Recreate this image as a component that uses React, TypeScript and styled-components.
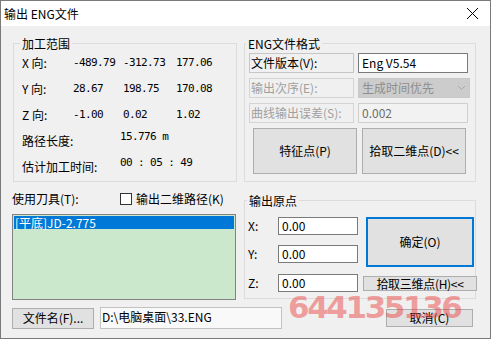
import React from 'react';
import styled, { createGlobalStyle } from 'styled-components';

const GlobalStyle = createGlobalStyle`
  html, body {
    margin: 0;
    padding: 0;
    background: #ffffff;
  }
  body {
    font-family: "Noto Sans CJK SC", "Noto Sans", sans-serif;
    font-size: 12px;
    line-height: 14px;
    color: #000;
  }
  * {
    box-sizing: border-box;
  }
`;

const Window = styled.div`
  position: relative;
  width: 491px;
  height: 339px;
  border: 1px solid #7a7a7a;
  background: #f0f0f0;
  display: flex;
  flex-direction: column;
  overflow: hidden;
`;

const TitleBar = styled.div`
  height: 25px;
  background: #ffffff;
  display: flex;
  align-items: center;
  justify-content: space-between;
  padding: 0 11px 0 3px;
`;

const CloseIcon = styled.svg`
  width: 13px;
  height: 13px;
`;

const Body = styled.div`
  flex: 1;
  padding: 11px 14px 0 11px;
  display: flex;
  flex-direction: column;
`;

const Row = styled.div<{ $gap: number; $top?: number }>`
  display: flex;
  gap: ${p => p.$gap}px;
  margin-top: ${p => p.$top ?? 0}px;
`;

const Group = styled.fieldset<{ $w: number; $h: number; $pl: number; $pt: number; $ml?: number; $mt?: number }>`
  margin: ${p => p.$mt ?? 0}px 0 0 ${p => p.$ml ?? 0}px;
  width: ${p => p.$w}px;
  height: ${p => p.$h}px;
  min-width: 0;
  border: 1px solid #dcdcdc;
  padding: ${p => p.$pt}px 2px 0 ${p => p.$pl}px;
`;

const Legend = styled.legend<{ $ml: number }>`
  padding: 0 2px;
  margin-left: ${p => p.$ml}px;
  line-height: 13px;
`;

const RangeGrid = styled.div`
  display: grid;
  grid-template-columns: 51px 50px 53px 1fr;
  grid-auto-rows: 26px;
  align-items: center;
`;

const Mono = styled.span`
  font-family: "DejaVu Sans Mono", "Liberation Mono", monospace;
  font-size: 11px;
  letter-spacing: -0.6px;
  white-space: pre;
`;

const StatRow = styled.div`
  display: flex;
  align-items: center;
  height: 26px;
`;

const StatLabel = styled.span`
  width: 98px;
`;

const StatValue = styled(Mono)`
  margin-bottom: 8px;
`;

const FormCol = styled.div`
  display: flex;
  flex-direction: column;
  gap: 5px;
`;

const FieldRow = styled.div`
  display: flex;
  gap: 4px;
`;

const LabelBox = styled.div<{ $disabled?: boolean }>`
  width: 105px;
  height: 20px;
  border: 1px solid ${p => (p.$disabled ? '#d4d4d4' : '#c6c6c6')};
  color: ${p => (p.$disabled ? '#a0a0a0' : '#000')};
  padding-left: 1px;
  display: flex;
  align-items: center;
`;

const TextBox = styled.div<{ $w: number; $h: number; $disabled?: boolean }>`
  width: ${p => p.$w}px;
  height: ${p => p.$h}px;
  border: 1px solid ${p => (p.$disabled ? '#cfcfcf' : '#7a7a7a')};
  background: ${p => (p.$disabled ? '#f2f2f2' : '#ffffff')};
  color: ${p => (p.$disabled ? '#6d6d6d' : '#000')};
  padding: 0 3px;
  display: flex;
  align-items: center;
`;

const SelectBox = styled.div`
  width: 112px;
  height: 20px;
  background: #cccccc;
  border: 1px solid #c8c8c8;
  color: #8e8e8e;
  padding: 0 3px;
  display: flex;
  align-items: center;
  justify-content: space-between;
`;

const Button = styled.div<{ $w: number; $h: number; $default?: boolean }>`
  width: ${p => p.$w}px;
  height: ${p => p.$h}px;
  background: #e1e1e1;
  border: ${p => (p.$default ? '2px solid #0078d7' : '1px solid #adadad')};
  display: flex;
  align-items: center;
  justify-content: center;
  flex-shrink: 0;
  white-space: nowrap;
`;

const ButtonRow = styled.div`
  display: flex;
  gap: 5px;
  padding-left: 4px;
`;

const LeftCol = styled.div`
  width: 225px;
  display: flex;
  flex-direction: column;
`;

const ToolHeader = styled.div`
  height: 18px;
  display: flex;
  align-items: center;
`;

const ToolLabel = styled.span`
  width: 108px;
`;

const Check = styled.span`
  width: 12px;
  height: 12px;
  border: 1px solid #333;
  background: #fff;
  margin-right: 4px;
`;

const ToolList = styled.div`
  margin-top: 6px;
  width: 224px;
  height: 86px;
  border: 1px solid #828282;
  background: #cce8cc;
  padding: 1px;
`;

const ToolItem = styled.div<{ $selected?: boolean }>`
  height: 13px;
  line-height: 13px;
  padding-left: 1px;
  background: ${p => (p.$selected ? '#0078d7' : 'transparent')};
  color: ${p => (p.$selected ? '#fff' : '#000')};
`;

const OriginGrid = styled.div`
  display: grid;
  grid-template-columns: 25px 80px 114px;
  grid-template-rows: 28px 22px 25px;
  column-gap: 5px;
`;

const AxisLabel = styled.span<{ $align: string }>`
  align-self: ${p => p.$align};
  line-height: 18px;
`;

const AxisInput = styled(TextBox)<{ $align: string }>`
  align-self: ${p => p.$align};
`;

const OkButton = styled(Button)`
  grid-column: 3;
  grid-row: 1 / 3;
  margin: 0 3px;
  width: auto;
`;

const PickButton = styled(Button)`
  grid-column: 3;
  grid-row: 3;
  align-self: end;
  margin-bottom: 1px;
  letter-spacing: -0.3px;
`;

const BottomRow = styled.div`
  margin-top: 7px;
  height: 22px;
  display: flex;
  align-items: center;
`;

const PathBox = styled.div`
  margin-left: 6px;
  width: 182px;
  height: 22px;
  border: 1px solid #c2c2c2;
  background: #f9f9f9;
  padding: 2px 1px 0;
  align-self: flex-start;
`;

const CancelButton = styled(Button)`
  margin-left: auto;
  margin-right: 3px;
`;

const Watermark = styled.div`
  position: absolute;
  left: 287px;
  top: 291px;
  font-family: "DejaVu Sans", sans-serif;
  font-weight: bold;
  font-size: 31px;
  line-height: 31px;
  letter-spacing: -2.4px;
  color: rgba(236, 64, 64, 0.48);
  pointer-events: none;
`;

const ranges = [
  ['X 向:', '-489.79', '-312.73', '177.06'],
  ['Y 向:', '28.67', '198.75', '170.08'],
  ['Z 向:', '-1.00', '0.02', '1.02'],
];

export default function App() {
  return (
    <>
      <GlobalStyle />
      <Window>
        <TitleBar>
          <span>输出 ENG文件</span>
          <CloseIcon viewBox="0 0 13 13">
            <path d="M1 1 L12 12 M12 1 L1 12" stroke="#000" strokeWidth="1" />
          </CloseIcon>
        </TitleBar>
        <Body>
          <Row $gap={7}>
            <Group $w={224} $h={145} $pl={8} $pt={0} $ml={1}>
              <Legend $ml={-2}>加工范围</Legend>
              <RangeGrid>
                {ranges.map(r =>
                  r.map((c, i) => (i === 0 ? <span key={r[0]}>{c}</span> : <Mono key={r[0] + i}>{c}</Mono>))
                )}
              </RangeGrid>
              <StatRow>
                <StatLabel>路径长度:</StatLabel>
                <StatValue>15.776 m</StatValue>
              </StatRow>
              <StatRow>
                <StatLabel>估计加工时间:</StatLabel>
                <StatValue>00 : 05 : 49</StatValue>
              </StatRow>
            </Group>
            <Group $w={232} $h={145} $pl={4} $pt={3}>
              <Legend $ml={-3}>ENG文件格式</Legend>
              <FormCol>
                <FieldRow>
                  <LabelBox>文件版本(V):</LabelBox>
                  <TextBox $w={110} $h={20}>Eng V5.54</TextBox>
                </FieldRow>
                <FieldRow>
                  <LabelBox $disabled>输出次序(E):</LabelBox>
                  <SelectBox>
                    <span>生成时间优先</span>
                    <svg width="9" height="6" viewBox="0 0 9 6">
                      <path d="M1 1 L4.5 4.5 L8 1" stroke="#a8a8a8" fill="none" />
                    </svg>
                  </SelectBox>
                </FieldRow>
                <FieldRow>
                  <LabelBox $disabled>曲线输出误差(S):</LabelBox>
                  <TextBox $w={110} $h={20} $disabled>0.002</TextBox>
                </FieldRow>
                <ButtonRow>
                  <Button $w={104} $h={46}>特征点(P)</Button>
                  <Button $w={104} $h={46}>拾取二维点(D)&lt;&lt;</Button>
                </ButtonRow>
              </FormCol>
            </Group>
          </Row>
          <Row $gap={7} $top={8}>
            <LeftCol>
              <ToolHeader>
                <ToolLabel>使用刀具(T):</ToolLabel>
                <Check />
                <span>输出二维路径(K)</span>
              </ToolHeader>
              <ToolList>
                <ToolItem $selected>[平底]JD-2.775</ToolItem>
              </ToolList>
            </LeftCol>
            <Group $w={232} $h={105} $pl={3} $pt={10} $mt={4}>
              <Legend $ml={-1}>输出原点</Legend>
              <OriginGrid>
                <AxisLabel $align="start">X:</AxisLabel>
                <AxisInput $w={80} $h={18} $align="start">0.00</AxisInput>
                <OkButton $w={108} $h={50} $default>确定(O)</OkButton>
                <AxisLabel $align="start">Y:</AxisLabel>
                <AxisInput $w={80} $h={18} $align="start">0.00</AxisInput>
                <AxisLabel $align="end">Z:</AxisLabel>
                <AxisInput $w={80} $h={18} $align="end">0.00</AxisInput>
                <PickButton $w={114} $h={15}>拾取三维点(H)&lt;&lt;</PickButton>
              </OriginGrid>
            </Group>
          </Row>
          <BottomRow>
            <Button $w={82} $h={21}>文件名(F)...</Button>
            <PathBox>D:\电脑桌面\33.ENG</PathBox>
            <CancelButton $w={87} $h={18}>取消(C)</CancelButton>
          </BottomRow>
        </Body>
        <Watermark>644135136</Watermark>
      </Window>
    </>
  );
}
